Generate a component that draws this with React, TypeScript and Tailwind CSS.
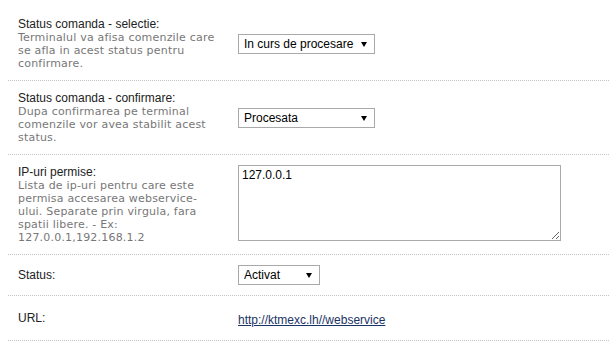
import type { ReactNode } from "react";

const ARIAL = "font-['Liberation_Sans',Arial,sans-serif]";
const VERDANA = "font-['DejaVu_Sans',Verdana,sans-serif]";

function Row({
  label,
  help,
  children,
  alignTop = false,
}: {
  label: string;
  help?: string;
  children: ReactNode;
  alignTop?: boolean;
}) {
  return (
    <div
      className={`grid grid-cols-[220px_1fr] border-b border-dotted border-[#c4c4c4] py-[10px] pl-[10px] ${
        alignTop ? "items-start" : "items-center"
      }`}
    >
      <div className="w-[200px]">
        <div className={`${ARIAL} text-[12px] leading-[14px] text-[#222]`}>{label}</div>
        {help ? (
          <div className={`${VERDANA} text-[11px] leading-[13px] tracking-[0.2px] text-[#777]`}>
            {help}
          </div>
        ) : null}
      </div>
      <div>{children}</div>
    </div>
  );
}

function Select({ value, width }: { value: string; width: string }) {
  return (
    <div className={`relative ${width}`}>
      <select
        defaultValue={value}
        className={`${ARIAL} block h-[20px] w-full appearance-none border border-[#a9a9a9] bg-white pl-[5px] pr-[2px] text-[12px] leading-[18px] text-black outline-none`}
      >
        <option>{value}</option>
      </select>
      <span className="pointer-events-none absolute right-[8px] top-[8px] h-0 w-0 border-x-[3px] border-t-[5px] border-x-transparent border-t-black" />
    </div>
  );
}

export default function App() {
  return (
    <div className="min-h-screen bg-white pt-[7px] pl-[8px]">
      <Row
        label="Status comanda - selectie:"
        help="Terminalul va afisa comenzile care se afla in acest status pentru confirmare."
      >
        <Select value="In curs de procesare" width="w-[137px]" />
      </Row>

      <Row
        label="Status comanda - confirmare:"
        help="Dupa confirmarea pe terminal comenzile vor avea stabilit acest status."
      >
        <Select value="Procesata" width="w-[137px]" />
      </Row>

      <Row
        label="IP-uri permise:"
        help="Lista de ip-uri pentru care este permisa accesarea webservice-ului. Separate prin virgula, fara spatii libere. - Ex: 127.0.0.1,192.168.1.2"
        alignTop
      >
        <textarea
          defaultValue="127.0.0.1"
          className={`${ARIAL} block h-[76px] w-[323px] border border-[#a9a9a9] px-[3px] py-[2px] text-[12px] leading-[15px] text-black outline-none`}
        />
      </Row>

      <Row label="Status:">
        <Select value="Activat" width="w-[82px]" />
      </Row>

      <Row label="URL:">
        <a
          href="#"
          className={`${ARIAL} text-[12px] leading-[14px] text-[#1b3366] underline`}
        >
          http://ktmexc.lh//webservice
        </a>
      </Row>
    </div>
  );
}
